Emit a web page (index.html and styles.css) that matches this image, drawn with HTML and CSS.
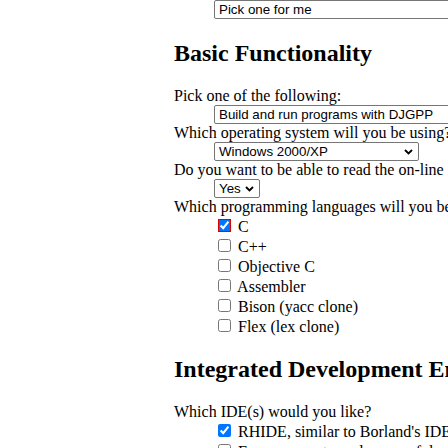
FILE: index.html
```html
<!DOCTYPE html>
<html>
<head>
<meta charset="utf-8">
<link rel="stylesheet" href="styles.css">
</head>
<body>
<div class="page">
  <dl class="q q-top">
    <dd><span class="select sel-wide"><span class="select-text">Pick one for me</span><svg class="chev" width="9" height="6" viewBox="0 0 9 6"><path d="M1 1 L4.5 4.5 L8 1" fill="none" stroke="#000" stroke-width="1.8"/></svg></span></dd>
  </dl>
  <h2>Basic Functionality</h2>
  <dl class="q">
    <dt>Pick one of the following:</dt>
    <dd><span class="select sel-wide"><span class="select-text">Build and run programs with DJGPP</span><svg class="chev" width="9" height="6" viewBox="0 0 9 6"><path d="M1 1 L4.5 4.5 L8 1" fill="none" stroke="#000" stroke-width="1.8"/></svg></span></dd>
    <dt>Which operating system will you be using?</dt>
    <dd><span class="select sel-os"><span class="select-text">Windows 2000/XP</span><svg class="chev" width="9" height="6" viewBox="0 0 9 6"><path d="M1 1 L4.5 4.5 L8 1" fill="none" stroke="#000" stroke-width="1.8"/></svg></span></dd>
    <dt>Do you want to be able to read the on-line documentation?</dt>
    <dd><span class="select sel-yes"><span class="select-text">Yes</span><svg class="chev" width="9" height="6" viewBox="0 0 9 6"><path d="M1 1 L4.5 4.5 L8 1" fill="none" stroke="#000" stroke-width="1.8"/></svg></span></dd>
    <dt>Which programming languages will you be programming in?</dt>
    <dd>
      <input type="checkbox" class="cb-flag" checked> C<br>
      <input type="checkbox"> C++<br>
      <input type="checkbox"> Objective C<br>
      <input type="checkbox"> Assembler<br>
      <input type="checkbox"> Bison (yacc clone)<br>
      <input type="checkbox"> Flex (lex clone)
    </dd>
  </dl>
  <h2>Integrated Development Environment</h2>
  <dl class="q">
    <dt>Which IDE(s) would you like?</dt>
    <dd>
      <input type="checkbox" checked> RHIDE, similar to Borland's IDE, including a built-in debugger<br>
      <input type="checkbox"> Emacs, an extremely powerful editor<br>
    </dd>
  </dl>
</div>
</body>
</html>
```

FILE: styles.css
```css
html {
  overflow: hidden;
}
body {
  margin: 0;
  font-family: "Liberation Serif", "Times New Roman", serif;
  font-size: 16px;
  color: #000;
  background: #fff;
}
.page {
  margin-left: 174px;
  width: 760px;
}
.q {
  margin: 0;
}
.q-top {
  padding-bottom: 1px;
}
.q dd {
  margin-left: 40px;
}
h2 {
  font-size: 24px;
  font-weight: bold;
  margin: 20px 0;
  white-space: nowrap;
}
.select {
  display: inline-flex;
  align-items: center;
  box-sizing: border-box;
  height: 19px;
  padding: 0 5px 0 4px;
  border: 1px solid #767676;
  border-radius: 2px;
  background: #fff;
  font-family: "Liberation Sans", Arial, sans-serif;
  font-size: 13.333px;
  line-height: 15px;
  color: #000;
  white-space: nowrap;
}
.chev {
  margin-left: auto;
  flex: none;
}
.sel-wide {
  width: 300px;
}
.sel-os {
  width: 205px;
}
.sel-yes {
  width: 46px;
}
.cb-flag {
  outline: 1px solid #e00000;
  outline-offset: -1px;
}
```
